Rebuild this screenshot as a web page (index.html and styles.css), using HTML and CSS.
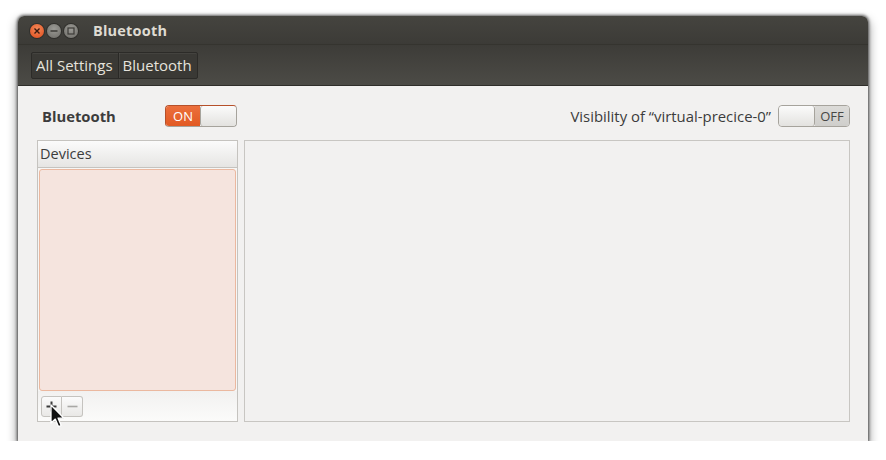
FILE: index.html
```html
<!DOCTYPE html>
<html>
<head>
<meta charset="utf-8">
<link rel="stylesheet" href="styles.css">
</head>
<body>
<div class="window">
  <div class="titlebar">
    <div class="wbtns">
      <span class="wbtn close"><svg width="8" height="8" viewBox="0 0 8 8"><path d="M1.5 1.5L6.5 6.5M6.5 1.5L1.5 6.5" stroke="#3a1a10" stroke-width="1.4"/></svg></span>
      <span class="wbtn"><svg width="8" height="8" viewBox="0 0 8 8"><path d="M0.5 4H7.5" stroke="#3c3b37" stroke-width="1.4"/></svg></span>
      <span class="wbtn"><svg width="8" height="8" viewBox="0 0 8 8"><rect x="1" y="1" width="6" height="6" fill="none" stroke="#3c3b37" stroke-width="1.2"/></svg></span>
    </div>
    <div class="title">Bluetooth</div>
  </div>
  <div class="toolbar">
    <div class="crumbs">
      <span class="crumb">All Settings</span>
      <span class="crumb">Bluetooth</span>
    </div>
  </div>
  <div class="content">
    <div class="toprow">
      <div class="left-ctl">
        <span class="lbl">Bluetooth</span>
        <span class="switch on"><span class="state">ON</span><span class="knob"></span></span>
      </div>
      <div class="right-ctl">
        <span class="vis">Visibility of “virtual-precice-0”</span>
        <span class="switch off"><span class="knob"></span><span class="state">OFF</span></span>
      </div>
    </div>
    <div class="panes">
      <div class="devpane">
        <div class="devhead">Devices</div>
        <div class="devlist"></div>
        <div class="devtools">
          <span class="tbtn plus"><svg width="11" height="11" viewBox="0 0 11 11"><path d="M5.5 0.5V10.5M0.5 5.5H10.5" stroke="#3a3a3a" stroke-width="2"/></svg></span><span class="tbtn minus"><svg width="11" height="11" viewBox="0 0 11 11"><path d="M0.5 5.5H10.5" stroke="#a9a8a5" stroke-width="1.6"/></svg></span>
          <svg class="cursor" width="16" height="25" viewBox="0 0 16 25"><path d="M1 1L1 19L5.3 15.1L8.4 22.6L11.2 21.5L8.1 14.2L14 14.2Z" fill="#111" stroke="#fff" stroke-width="1.3" stroke-linejoin="round"/></svg>
        </div>
      </div>
      <div class="detail"></div>
    </div>
  </div>
</div>
</body>
</html>
```
FILE: styles.css
```css
html, body {
  margin: 0;
  padding: 0;
  background: #ffffff;
}
body {
  padding: 16px 0 0 18px;
  font-family: "Open Sans", "Noto Sans", sans-serif;
}
.window {
  width: 850px;
  height: 425px;
  border-radius: 6px 6px 0 0;
  background: #f2f1f0;
  box-shadow: 0 0 3px 1px rgba(0,0,0,0.6), 0 5px 10px 2px rgba(0,0,0,0.35);
  display: flex;
  flex-direction: column;
  overflow: hidden;
}
.titlebar {
  height: 29px;
  background: linear-gradient(#45443f, #3c3b37);
  display: flex;
  align-items: center;
  border-bottom: 1px solid #35342f;
  box-sizing: border-box;
}
.wbtns {
  display: flex;
  gap: 3px;
  margin-left: 12px;
  margin-top: 1px;
}
.wbtn {
  width: 14px;
  height: 14px;
  border-radius: 50%;
  background: radial-gradient(circle at 50% 35%, #9b9a95, #6d6c67);
  display: flex;
  align-items: center;
  justify-content: center;
  box-shadow: 0 0 0 1px rgba(0,0,0,0.25);
}
.wbtn.close {
  background: radial-gradient(circle at 50% 35%, #f48a5a, #df4a1a);
}
.title {
  margin-left: 15px;
  color: #dfdbd2;
  font-weight: bold;
  font-size: 14.5px;
  letter-spacing: 0.2px;
}
.toolbar {
  height: 41px;
  background: linear-gradient(#3d3c38, #4c4b46);
  display: flex;
  align-items: center;
  padding-left: 13px;
  border-bottom: 1px solid #2f2e2a;
  box-sizing: border-box;
}
.crumbs {
  display: flex;
  background: #3a3935;
  border: 1px solid #2c2b28;
  border-radius: 2px;
  box-shadow: inset 0 1px 0 rgba(255,255,255,0.05);
}
.crumb {
  color: #e6e3dc;
  font-size: 15px;
  height: 25px;
  line-height: 25px;
  padding: 0 5px 0 4px;
}
.crumb + .crumb {
  border-left: 1px solid #2a2926;
  box-shadow: inset 1px 0 0 rgba(255,255,255,0.06);
}
.content {
  flex: 1;
  padding: 19px 18px 19px 19px;
  display: flex;
  flex-direction: column;
  gap: 13px;
}
.toprow {
  display: flex;
  justify-content: space-between;
  align-items: center;
  height: 22px;
}
.left-ctl, .right-ctl {
  display: flex;
  align-items: center;
}
.lbl {
  width: 123px;
  margin-left: 5px;
  font-weight: bold;
  font-size: 14.8px;
  color: #3c3c3c;
}
.vis {
  font-size: 14.9px;
  color: #3c3c3c;
  margin-right: 7px;
}
.switch {
  width: 72px;
  height: 22px;
  box-sizing: border-box;
  border: 1px solid #a6a39c;
  border-radius: 4px;
  display: flex;
  overflow: hidden;
  font-size: 13px;
}
.switch .state {
  flex: 1;
  display: flex;
  align-items: center;
  justify-content: center;
}
.switch.on .state {
  background: linear-gradient(#ec6f3c, #e25a23);
  color: #ffffff;
}
.switch.on {
  border-color: #b6502a #a6a39c #a6a39c #b6502a;
}
.switch.off .state {
  background: linear-gradient(#dcdbd8, #cfcecb);
  color: #474745;
}
.switch .knob {
  width: 35px;
  background: linear-gradient(#fbfbfb, #e3e2df);
  border-left: 1px solid #a6a39c;
  border-radius: 3px;
}
.switch.off .knob {
  border-left: none;
  border-right: 1px solid #a6a39c;
}
.panes {
  flex: 1;
  display: flex;
  gap: 6px;
}
.devpane {
  width: 201px;
  box-sizing: border-box;
  border: 1px solid #c5c3bf;
  display: flex;
  flex-direction: column;
  background: #f7f6f5;
}
.devhead {
  height: 27px;
  box-sizing: border-box;
  border-bottom: 1px solid #c5c3bf;
  background: linear-gradient(#fbfbfb, #e6e5e3);
  font-size: 14.5px;
  color: #3c3c3c;
  padding-left: 2px;
  line-height: 26px;
}
.devlist {
  flex: 1;
  margin: 1px 1px 0 1px;
  background: #f5e4de;
  border: 1px solid #ebb89f;
  border-radius: 3px;
}
.devtools {
  height: 30px;
  display: flex;
  align-items: center;
  padding-left: 3px;
  position: relative;
  background: linear-gradient(#f2f1f0, #fbfbfa);
}
.tbtn {
  width: 21px;
  height: 21px;
  box-sizing: border-box;
  border: 1px solid #c5c3bf;
  background: linear-gradient(#fbfbfb, #e9e8e6);
  display: flex;
  align-items: center;
  justify-content: center;
}
.tbtn.plus {
  border-radius: 3px 0 0 3px;
}
.tbtn.minus {
  border-left: none;
  border-radius: 0 3px 3px 0;
}
.cursor {
  position: absolute;
  left: 12px;
  top: 13px;
}
.detail {
  flex: 1;
  border: 1px solid #c8c6c2;
  background: #f2f1f0;
}
```
